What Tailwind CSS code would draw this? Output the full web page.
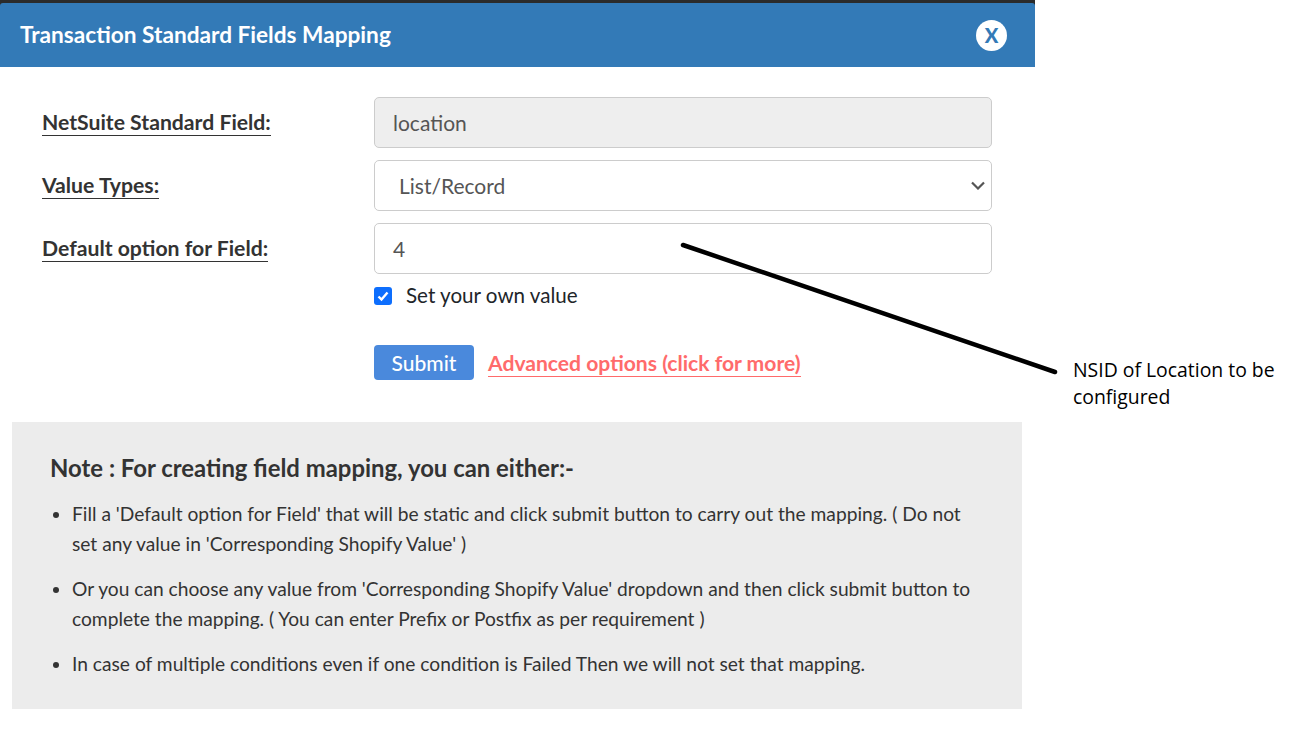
<!DOCTYPE html>
<html lang="en">
<head>
  <meta charset="UTF-8" />
  <title>Transaction Standard Fields Mapping</title>
  <script src="https://cdn.jsdelivr.net/npm/@tailwindcss/browser@4"></script>
</head>
<body class="bg-white font-['Lato',sans-serif] text-[#333]">
<div class="relative w-[1294px] h-[733px] overflow-hidden bg-white">

  <!-- Modal -->
  <div class="w-[1035px]">
    <div class="bg-[#2b2b2b] pt-[3px]">
      <header class="h-[64px] bg-[#337ab7] rounded-t-[3px] flex items-center justify-between pl-[20px] pr-[28px]">
        <h1 class="text-[22.65px] font-bold text-white">Transaction Standard Fields Mapping</h1>
        <button class="w-[31px] h-[31px] rounded-full bg-white text-[#337ab7] font-black text-[20px] leading-none flex items-center justify-center">X</button>
      </header>
    </div>

    <!-- Form -->
    <form class="pt-[30px] pl-[42px] pr-[43px]">
      <div class="flex h-[51px] mb-[12px]">
        <div class="w-[332px] pt-[12px]"><label class="inline-block text-[21.2px] font-bold leading-[26px] border-b-[1.5px] border-[#333]">NetSuite Standard Field:</label></div>
        <div class="flex-1 h-full flex items-center px-[18px] bg-[#eee] border border-[#ccc] rounded-[5px] text-[21px] text-[#555]">location</div>
      </div>
      <div class="flex h-[51px] mb-[12px]">
        <div class="w-[332px] pt-[12px]"><label class="inline-block text-[21.2px] font-bold leading-[26px] border-b-[1.5px] border-[#333]">Value Types:</label></div>
        <div class="flex-1 h-full flex items-center justify-between pl-[24px] pr-[6px] bg-white border border-[#ccc] rounded-[5px] text-[21px] text-[#555]">
          <span>List/Record</span>
          <svg width="14" height="9" viewBox="0 0 14 9" fill="none" stroke="#555" stroke-width="2.2"><path d="M1 1.5l6 6 6-6" /></svg>
        </div>
      </div>
      <div class="flex h-[51px]">
        <div class="w-[332px] pt-[12px]"><label class="inline-block text-[21.2px] font-bold leading-[26px] border-b-[1.5px] border-[#333]">Default option for Field:</label></div>
        <div class="flex-1 h-full flex items-center px-[18px] bg-white border border-[#ccc] rounded-[5px] text-[21px] text-[#555]">4</div>
      </div>

      <div class="ml-[332px] mt-[10px] flex items-center h-[24px]">
        <span class="w-[18px] h-[18px] rounded-[3px] bg-[#0d6efd] flex items-center justify-center">
          <svg width="14" height="14" viewBox="0 0 14 14" fill="none" stroke="#fff" stroke-width="2.4"><path d="M2.5 7.5l3 3 6-7" /></svg>
        </span>
        <span class="ml-[14px] text-[20.6px] text-[#212529] -translate-y-px">Set your own value</span>
      </div>

      <div class="ml-[332px] mt-[37px] flex items-center">
        <button type="button" class="w-[100px] h-[35px] bg-[#4a89dc] rounded-[4px] text-white text-[21px] font-medium">Submit</button>
        <a class="ml-[14px] mt-[1px] text-[21.1px] font-bold leading-[26px] text-[#ff6b6b] border-b-[1.5px] border-[#ff6b6b]">Advanced options (click for more)</a>
      </div>
    </form>
  </div>

  <!-- Note box -->
  <section class="ml-[12px] mt-[42px] w-[1010px] h-[287px] bg-[#ececec] pl-[38px] pr-[42px] pt-[30px]">
    <h2 class="text-[23.9px] font-bold leading-[32px] text-[#333]">Note : For creating field mapping, you can either:-</h2>
    <ul class="list-disc pl-[22px] mt-[15px] text-[19.2px] leading-[30px] text-[#333]">
      <li class="mb-[15px]">Fill a 'Default option for Field' that will be static and click submit button to carry out the mapping. ( Do not set any value in 'Corresponding Shopify Value' )</li>
      <li class="mb-[15px]">Or you can choose any value from 'Corresponding Shopify Value' dropdown and then click submit button to complete the mapping. ( You can enter Prefix or Postfix as per requirement )</li>
      <li>In case of multiple conditions even if one condition is Failed Then we will not set that mapping.</li>
    </ul>
  </section>

  <!-- Annotation drawn over the screenshot -->
  <svg class="absolute left-0 top-0 pointer-events-none" width="1294" height="733" fill="none"><path d="M683 245L1055 372" stroke="#000" stroke-width="4.5" stroke-linecap="round" /></svg>
  <p class="absolute left-[1073px] top-[356px] w-[215px] font-['Open_Sans',sans-serif] text-[19.4px] leading-[27px] text-black">NSID of Location to be configured</p>
</div>
</body>
</html>
